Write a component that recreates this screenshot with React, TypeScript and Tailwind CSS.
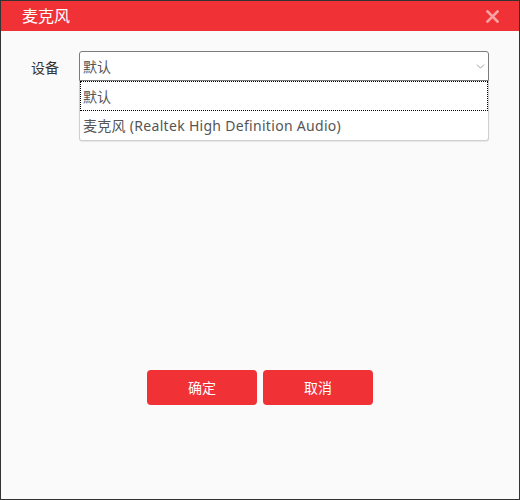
import { ChevronDown } from "lucide-react";

const font = { fontFamily: '"Noto Sans", "Noto Sans CJK SC", sans-serif' };

export default function App() {
  return (
    <div
      className="w-[520px] h-[500px] border border-[#333333] bg-[#fafafa] flex flex-col"
      style={font}
    >
      <div className="h-[30px] bg-[#f03236] flex items-center justify-between pl-[21px] pr-[20px] shrink-0">
        <span className="text-white text-[16px] leading-none">麦克风</span>
        <svg width="13" height="13" viewBox="0 0 13 13" className="mt-[1px]">
          <path d="M1.5 1.5 L11.5 11.5 M11.5 1.5 L1.5 11.5" stroke="rgba(255,255,255,0.55)" strokeWidth="2.6" strokeLinecap="square" />
        </svg>
      </div>

      <div className="flex-1 flex flex-col">
        <div className="flex items-start pt-[20px]">
          <label className="w-[78px] pl-[30px] pt-[6px] text-[14px] text-[#333]">设备</label>
          <div className="w-[410px]">
            <div className="h-[30px] border border-[#7a7a7a] rounded-t-[3px] bg-white flex items-center justify-between pl-[3px] pr-[1px]">
              <span className="text-[14px] text-[#555]">默认</span>
              <ChevronDown className="w-[13px] h-[13px] text-[#888]" strokeWidth={1.5} />
            </div>
            <ul className="bg-white border border-t-0 border-[#cfcfcf] rounded-b-[3px] shadow-[0_1px_1px_rgba(0,0,0,0.08)]">
              <li className="h-[30px] border border-dotted border-black flex items-center pl-[2px] text-[14px] text-[#555]">
                默认
              </li>
              <li className="h-[29px] flex items-center pl-[3px] text-[14px] text-[#555] tracking-[0.3px]">
                麦克风 (Realtek High Definition Audio)
              </li>
            </ul>
          </div>
        </div>

        <div className="mt-auto mb-[94px] flex justify-center gap-[6px]">
          <button className="w-[110px] h-[35px] rounded-[4px] bg-[#f03236] text-white text-[14px]">
            确定
          </button>
          <button className="w-[110px] h-[35px] rounded-[4px] bg-[#f03236] text-white text-[14px]">
            取消
          </button>
        </div>
      </div>
    </div>
  );
}
